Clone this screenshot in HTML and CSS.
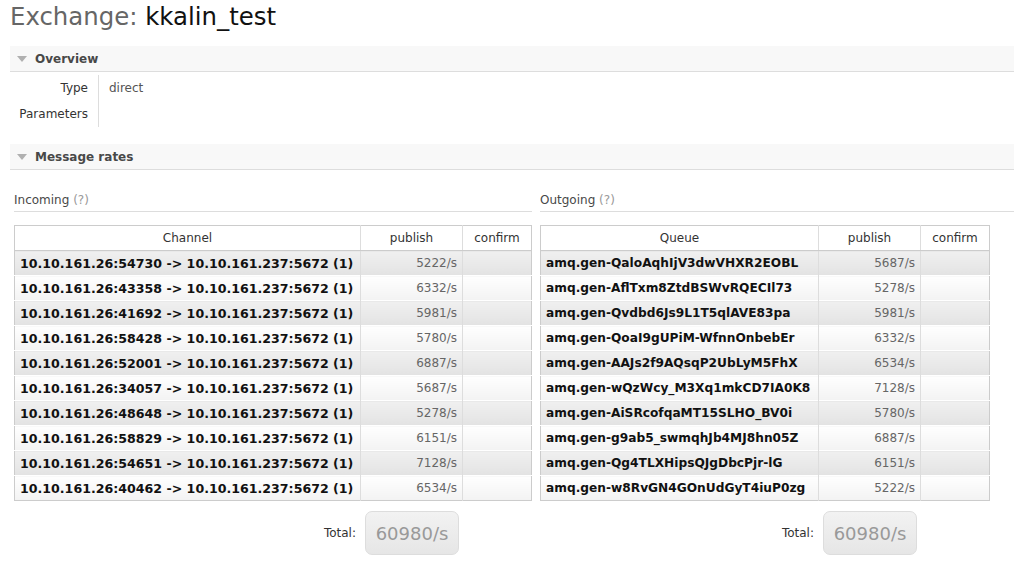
FILE: index.html
```html
<!DOCTYPE html>
<html>
<head>
<meta charset="utf-8">
<link rel="stylesheet" href="styles.css">
</head>
<body>
<h1 class="title"><span class="title-kind">Exchange:</span> <b class="title-name">kkalin_test</b></h1>

<div class="section">
  <h2 class="section-head"><span class="tri"></span>Overview</h2>
  <div class="section-body">
    <table class="facts">
      <tr><th>Type</th><td>direct</td></tr>
      <tr><th>Parameters</th><td></td></tr>
    </table>
  </div>
</div>

<div class="section">
  <h2 class="section-head"><span class="tri"></span>Message rates</h2>
  <div class="rates">
    <div class="rates-col rates-in">
      <h3 class="sub">Incoming <span class="help">(?)</span></h3>
      <table class="list">
        <thead><tr><th class="c-name">Channel</th><th class="c-pub">publish</th><th class="c-conf">confirm</th></tr></thead>
        <tbody>
          <tr class="alt1"><td class="name">10.10.161.26:54730 -&gt; 10.10.161.237:5672 (1)</td><td class="num">5222/s</td><td></td></tr>
          <tr class="alt2"><td class="name">10.10.161.26:43358 -&gt; 10.10.161.237:5672 (1)</td><td class="num">6332/s</td><td></td></tr>
          <tr class="alt1"><td class="name">10.10.161.26:41692 -&gt; 10.10.161.237:5672 (1)</td><td class="num">5981/s</td><td></td></tr>
          <tr class="alt2"><td class="name">10.10.161.26:58428 -&gt; 10.10.161.237:5672 (1)</td><td class="num">5780/s</td><td></td></tr>
          <tr class="alt1"><td class="name">10.10.161.26:52001 -&gt; 10.10.161.237:5672 (1)</td><td class="num">6887/s</td><td></td></tr>
          <tr class="alt2"><td class="name">10.10.161.26:34057 -&gt; 10.10.161.237:5672 (1)</td><td class="num">5687/s</td><td></td></tr>
          <tr class="alt1"><td class="name">10.10.161.26:48648 -&gt; 10.10.161.237:5672 (1)</td><td class="num">5278/s</td><td></td></tr>
          <tr class="alt2"><td class="name">10.10.161.26:58829 -&gt; 10.10.161.237:5672 (1)</td><td class="num">6151/s</td><td></td></tr>
          <tr class="alt1"><td class="name">10.10.161.26:54651 -&gt; 10.10.161.237:5672 (1)</td><td class="num">7128/s</td><td></td></tr>
          <tr class="alt2"><td class="name">10.10.161.26:40462 -&gt; 10.10.161.237:5672 (1)</td><td class="num">6534/s</td><td></td></tr>
        </tbody>
      </table>
      <div class="total">
        <span class="total-label">Total:</span>
        <span class="total-box">60980/s</span>
      </div>
    </div>
    <div class="rates-col rates-out">
      <h3 class="sub">Outgoing <span class="help">(?)</span></h3>
      <table class="list">
        <thead><tr><th class="c-name">Queue</th><th class="c-pub">publish</th><th class="c-conf">confirm</th></tr></thead>
        <tbody>
          <tr class="alt1"><td class="name">amq.gen-QaloAqhIjV3dwVHXR2EOBL</td><td class="num">5687/s</td><td></td></tr>
          <tr class="alt2"><td class="name">amq.gen-AflTxm8ZtdBSWvRQECIl73</td><td class="num">5278/s</td><td></td></tr>
          <tr class="alt1"><td class="name">amq.gen-Qvdbd6Js9L1T5qlAVE83pa</td><td class="num">5981/s</td><td></td></tr>
          <tr class="alt2"><td class="name">amq.gen-QoaI9gUPiM-WfnnOnbebEr</td><td class="num">6332/s</td><td></td></tr>
          <tr class="alt1"><td class="name">amq.gen-AAJs2f9AQsqP2UbLyM5FhX</td><td class="num">6534/s</td><td></td></tr>
          <tr class="alt2"><td class="name">amq.gen-wQzWcy_M3Xq1mkCD7IA0K8</td><td class="num">7128/s</td><td></td></tr>
          <tr class="alt1"><td class="name">amq.gen-AiSRcofqaMT15SLHO_BV0i</td><td class="num">5780/s</td><td></td></tr>
          <tr class="alt2"><td class="name">amq.gen-g9ab5_swmqhJb4MJ8hn05Z</td><td class="num">6887/s</td><td></td></tr>
          <tr class="alt1"><td class="name">amq.gen-Qg4TLXHipsQJgDbcPjr-lG</td><td class="num">6151/s</td><td></td></tr>
          <tr class="alt2"><td class="name">amq.gen-w8RvGN4GOnUdGyT4iuP0zg</td><td class="num">5222/s</td><td></td></tr>
        </tbody>
      </table>
      <div class="total">
        <span class="total-label">Total:</span>
        <span class="total-box">60980/s</span>
      </div>
    </div>
  </div>
</div>
</body>
</html>
```
FILE: styles.css
```css
html, body {
  margin: 0;
  padding: 0;
  background: #fff;
}
body {
  font-family: "DejaVu Sans", Verdana, sans-serif;
  font-size: 12px;
  color: #484848;
}
.title {
  margin: 0;
  padding: 2px 0 0 10px;
  height: 46px;
  box-sizing: border-box;
  font-size: 24.4px;
  font-weight: normal;
  line-height: 30px;
  color: #666;
}
.title-name {
  font-weight: normal;
  color: #111;
}
.section {
  margin-left: 10px;
}
.section-head {
  margin: 0;
  height: 26px;
  box-sizing: border-box;
  background: #f8f8f8;
  border-bottom: 1px solid #ddd;
  display: flex;
  align-items: center;
  padding-left: 7px;
  font-size: 12px;
  font-weight: bold;
  color: #484848;
}
.tri {
  width: 0;
  height: 0;
  border-left: 5px solid transparent;
  border-right: 5px solid transparent;
  border-top: 6px solid #b0b0b0;
  margin-right: 8px;
}
.section-body {
  padding: 3px 0 17px 0;
}
.facts {
  border-collapse: collapse;
}
.facts th {
  width: 78px;
  text-align: right;
  font-weight: normal;
  padding: 0 10px 0 0;
  height: 26px;
  border-right: 1px solid #ddd;
  color: #333;
}
.facts td {
  padding: 0 0 0 10px;
  color: #555;
}
.rates {
  display: flex;
  padding-top: 18px;
  gap: 8px;
}
.rates-in {
  width: 518px;
  padding-left: 4px;
}
.rates-out {
  flex: 1;
}
.sub {
  margin: 0 0 13px 0;
  font-size: 12px;
  font-weight: normal;
  color: #484848;
  height: 23px;
  line-height: 24px;
  border-bottom: 1px solid #ddd;
}
.help {
  color: #999;
}
.list {
  border-collapse: collapse;
  border: 1px solid #ccc;
  table-layout: fixed;
}
.rates-in .list { width: 518px; }
.rates-out .list { width: 450px; }
.list th, .list td { box-sizing: border-box; }
.rates-in .c-name { width: 346px; }
.rates-out .c-name { width: 278px; }
.c-pub { width: 102px; }
.list th {
  height: 25px;
  padding: 0 5px;
  font-weight: normal;
  color: #333;
  background: #fff;
  border-left: 1px solid #ddd;
  border-bottom: 1px solid #ccc;
}
.list td {
  height: 25px;
  padding: 0 5px;
  border-left: 1px solid #ddd;
  border-top: 1px solid #fff;
  white-space: nowrap;
}
.list td:first-child, .list th:first-child { border-left: 0; }
.name {
  font-weight: bold;
  font-size: 12.6px;
  color: #111;
}
.rates-out .name {
  font-size: 12.2px;
}
.num {
  text-align: right;
  color: #666;
}
.alt1 td {
  background: linear-gradient(#f0f0f0, #e3e3e3);
}
.alt2 td {
  background: linear-gradient(#ffffff, #f3f3f3);
}
.total {
  display: flex;
  align-items: center;
  margin-top: 10px;
}
.total-label {
  text-align: right;
  color: #333;
  padding-right: 4px;
  box-sizing: border-box;
}
.rates-in .total-label { width: 346px; }
.rates-out .total-label { width: 278px; }
.total-box {
  margin-left: 5px;
  width: 94px;
  height: 44px;
  box-sizing: border-box;
  border: 1px solid #ddd;
  border-radius: 7px;
  background: linear-gradient(#f2f2f2, #e6e6e6);
  color: #999;
  font-size: 18px;
  display: flex;
  align-items: center;
  justify-content: center;
}
```
